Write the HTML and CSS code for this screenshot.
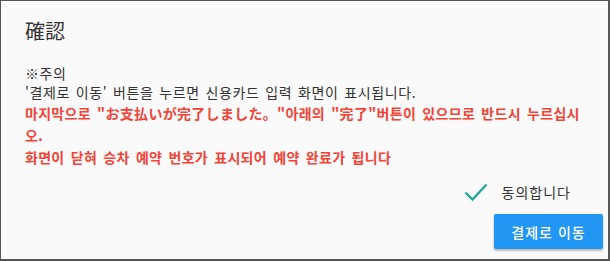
FILE: index.html
```html
<!DOCTYPE html>
<html lang="ko">
<head>
<meta charset="utf-8">
<link rel="stylesheet" href="styles.css">
</head>
<body>
<div class="dialog">
  <h2 class="title">確認</h2>
  <div class="content">
    <p class="note">※주의</p>
    <p class="note">'결제로 이동' 버튼을 누르면 신용카드 입력 화면이 표시됩니다.</p>
    <p class="warn">마지막으로 "お支払いが完了しました。"아래의 "完了"버튼이 있으므로 반드시 누르십시오.</p>
    <p class="warn">화면이 닫혀 승차 예약 번호가 표시되어 예약 완료가 됩니다</p>
  </div>
  <div class="agree">
    <svg class="check" width="24" height="20" viewBox="0 0 24 20"><path d="M1.5 10.5 L8.5 17.5 L22.5 2.5" fill="none" stroke="#26a69a" stroke-width="2.4"/></svg>
    <span class="agree-label">동의합니다</span>
  </div>
  <div class="actions">
    <button class="btn">결제로 이동</button>
  </div>
</div>
</body>
</html>
```

FILE: styles.css
```css
html, body {
  margin: 0;
  padding: 0;
}
body {
  width: 610px;
  height: 261px;
  font-family: "Noto Sans CJK KR", "Noto Sans", sans-serif;
  color: #333;
}
.dialog {
  box-sizing: border-box;
  width: 610px;
  height: 261px;
  background: #fafafa;
  border: 1px solid #555;
  border-right-width: 2px;
  border-bottom-width: 2px;
  display: flex;
  flex-direction: column;
}
.title {
  margin: 0;
  padding: 16px 24px 0;
  font-size: 20px;
  font-weight: 400;
  line-height: 28px;
  color: #333;
}
.content {
  padding: 19px 24px 0;
}
.content p {
  margin: 0;
}
.note {
  font-size: 14px;
  line-height: 19px;
  letter-spacing: 0.6px;
  word-spacing: 1.3px;
  color: #333;
}
.warn {
  font-size: 14px;
  font-weight: 700;
  line-height: 22px;
  letter-spacing: 0.3px;
  word-spacing: 2px;
  color: #f44336;
}
.agree {
  display: flex;
  align-items: center;
  justify-content: flex-end;
  padding: 14px 37px 0 0;
  gap: 14px;
}
.check {
  display: block;
}
.agree-label {
  font-size: 14px;
  line-height: 20px;
  letter-spacing: 1px;
  color: #333;
}
.actions {
  display: flex;
  justify-content: flex-end;
  padding: 12px 5px 0 0;
}
.btn {
  font-family: "Noto Sans CJK KR", "Noto Sans", sans-serif;
  font-size: 14px;
  font-weight: 500;
  letter-spacing: 1px;
  color: #fff;
  background: #2196f3;
  border: none;
  border-radius: 2px;
  width: 109px;
  height: 35px;
  padding: 0;
  box-shadow: 0 2px 2px rgba(0,0,0,0.24), 0 0 2px rgba(0,0,0,0.12);
}
```
